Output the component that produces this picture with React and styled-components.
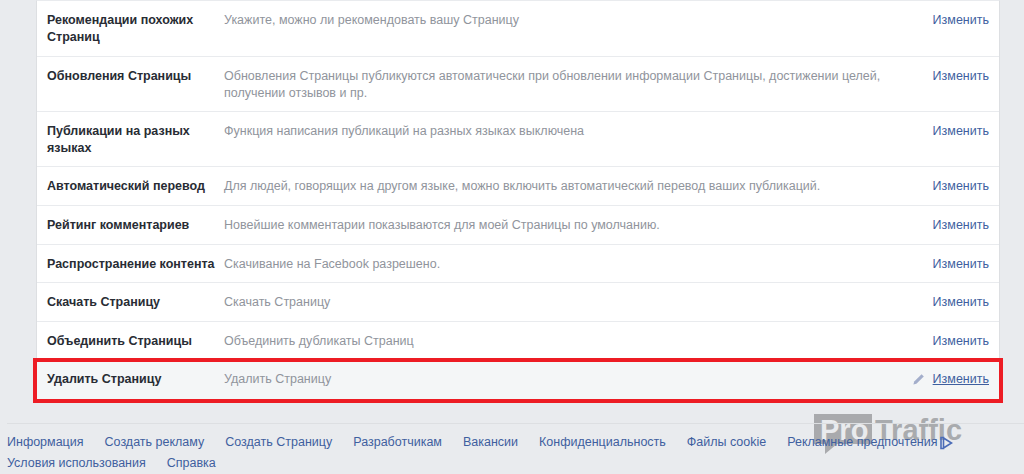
import React from 'react';
import styled, { createGlobalStyle } from 'styled-components';

const GlobalStyle = createGlobalStyle`
  html, body {
    margin: 0;
    background: #e9ebee;
    overflow: hidden;
  }
  body {
    font-family: "Liberation Sans", Arial, sans-serif;
    font-size: 12.5px;
  }
`;

const Page = styled.div`
  position: relative;
  width: 1024px;
  height: 474px;
  overflow: hidden;
`;

const Card = styled.div`
  margin: 0 24px 0 36px;
  background: #fff;
  border: 1px solid #dddfe2;
  border-top-color: #e9ebee;
  border-bottom: none;
`;

const Row = styled.div`
  display: grid;
  grid-template-columns: 177px 1fr 100px;
  box-sizing: border-box;
  height: ${({ $height }) => $height}px;
  padding: ${({ $active }) => ($active ? '9px' : '11px')} 10px 0;
  line-height: 17px;
  border-top: ${({ $first, $active }) => ($first || $active ? 'none' : '1px solid #e9ebee')};
  background: ${({ $active }) => ($active ? '#f4f6f7' : '#fff')};
  outline: ${({ $active }) => ($active ? '4px solid #ed1c24' : 'none')};
  position: ${({ $active }) => ($active ? 'relative' : 'static')};
`;

const Label = styled.div`
  font-weight: 700;
  color: #282c34;
  padding-right: 4px;
  white-space: pre-line;
`;

const Description = styled.div`
  color: #90949c;
  white-space: pre-line;
`;

const EditCell = styled.div`
  display: flex;
  justify-content: flex-end;
  align-items: flex-start;
  gap: 8px;
`;

const EditLink = styled.a`
  color: #3f5f9f;
  text-decoration: ${({ $active }) => ($active ? 'underline' : 'none')};
`;

const PencilIcon = styled.svg`
  width: 13px;
  height: 13px;
  margin-top: 2px;
  fill: #a3aecb;
`;

const Footer = styled.div`
  position: relative;
  z-index: 1;
  margin: 24px 0 0 7px;
  padding-top: 8px;
  border-top: 1px solid #dddfe2;
`;

const FooterLine = styled.div`
  display: flex;
  gap: 21px;
  height: 21px;
  line-height: 17px;
  white-space: nowrap;
`;

const FooterLink = styled.a`
  color: #3f5f9f;
  display: inline-flex;
  align-items: center;
`;

const AdIcon = styled.svg`
  width: 14px;
  height: 14px;
  margin-left: 1px;
  fill: none;
  stroke: #4b6cb7;
  stroke-width: 1.6;
`;

const Watermark = styled.div`
  position: absolute;
  left: 814px;
  top: 414px;
  display: flex;
  align-items: flex-start;
  font-size: 29px;
  font-weight: 700;
  line-height: 30px;
`;

const WatermarkBox = styled.div`
  position: relative;
  width: 58px;
  height: 30px;
  padding: 0 0 0 6px;
  box-sizing: border-box;
  background: #a9aaad;
  color: #e9ebee;
  line-height: 32px;

  &::after {
    content: '';
    position: absolute;
    left: 11px;
    top: 30px;
    border-top: 10px solid #a9aaad;
    border-right: 12px solid transparent;
  }
`;

const WatermarkText = styled.div`
  color: #a9abae;
  margin: 1px 0 0 3px;
`;

const rows = [
  { height: 55, label: 'Рекомендации похожих\nСтраниц', text: 'Укажите, можно ли рекомендовать вашу Страницу', first: true },
  { height: 55, label: 'Обновления Страницы', text: 'Обновления Страницы публикуются автоматически при обновлении информации Страницы, достижении целей,\nполучении отзывов и пр.' },
  { height: 55, label: 'Публикации на разных\nязыках', text: 'Функция написания публикаций на разных языках выключена' },
  { height: 39, label: 'Автоматический перевод', text: 'Для людей, говорящих на другом языке, можно включить автоматический перевод ваших публикаций.' },
  { height: 39, label: 'Рейтинг комментариев', text: 'Новейшие комментарии показываются для моей Страницы по умолчанию.' },
  { height: 38, label: 'Распространение контента', text: 'Скачивание на Facebook разрешено.' },
  { height: 39, label: 'Скачать Страницу', text: 'Скачать Страницу' },
  { height: 41, label: 'Объединить Страницы', text: 'Объединить дубликаты Страниц' },
  { height: 37, label: 'Удалить Страницу', text: 'Удалить Страницу', active: true },
];

const footerLines = [
  ['Информация', 'Создать рекламу', 'Создать Страницу', 'Разработчикам', 'Вакансии', 'Конфиденциальность', 'Файлы cookie'],
  ['Условия использования', 'Справка'],
];

const App = () => (
  <Page>
    <GlobalStyle />
    <Card>
      {rows.map(row => (
        <Row key={row.label} $height={row.height} $first={row.first} $active={row.active}>
          <Label>{row.label}</Label>
          <Description>{row.text}</Description>
          <EditCell>
            {row.active && (
              <PencilIcon viewBox="0 0 13 13">
                <path d="M9.6 1.2l2.2 2.2-7.4 7.4-3 .8.8-3z" />
              </PencilIcon>
            )}
            <EditLink $active={row.active}>Изменить</EditLink>
          </EditCell>
        </Row>
      ))}
    </Card>
    <Footer>
      <FooterLine>
        {footerLines[0].map(link => (
          <FooterLink key={link}>{link}</FooterLink>
        ))}
        <FooterLink>
          Рекламные предпочтения
          <AdIcon viewBox="0 0 14 14">
            <path d="M2 1.5h2.5v11H2zM4.5 2l8 5-8 5" />
          </AdIcon>
        </FooterLink>
      </FooterLine>
      <FooterLine>
        {footerLines[1].map(link => (
          <FooterLink key={link}>{link}</FooterLink>
        ))}
      </FooterLine>
    </Footer>
    <Watermark>
      <WatermarkBox>Pro</WatermarkBox>
      <WatermarkText>Traffic</WatermarkText>
    </Watermark>
  </Page>
);

export default App;
